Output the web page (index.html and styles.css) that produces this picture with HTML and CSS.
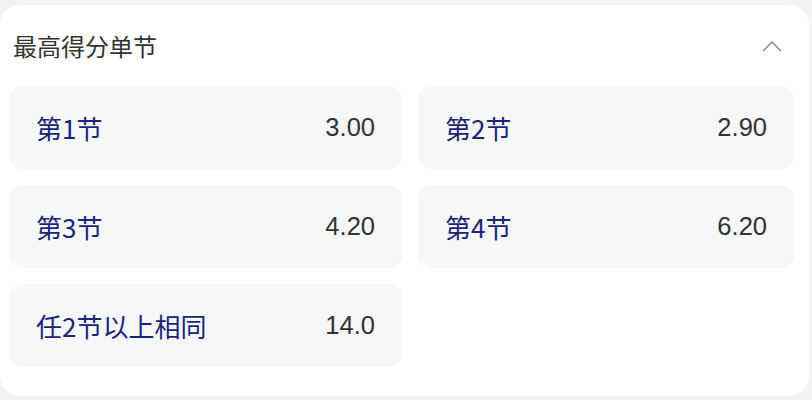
FILE: index.html
```html
<!DOCTYPE html>
<html lang="zh-CN">
<head>
    <meta charset="UTF-8">
    <meta name="viewport" content="width=device-width, initial-scale=1.0">
    <title>最高得分单节</title>
    <link rel="stylesheet" href="styles.css">
</head>
<body>
    <section class="market">
        <header class="market-head">
            <h2>最高得分单节</h2>
            <svg class="toggle" width="20" height="12" viewBox="0 0 20 12">
                <polyline points="1,11 10,2 19,11" fill="none" stroke="#8c8c8c" stroke-width="1.5"/>
            </svg>
        </header>
        <div class="odds">
            <div class="odd"><span class="name">第1节</span><span class="price">3.00</span></div>
            <div class="odd"><span class="name">第2节</span><span class="price">2.90</span></div>
            <div class="odd"><span class="name">第3节</span><span class="price">4.20</span></div>
            <div class="odd"><span class="name">第4节</span><span class="price">6.20</span></div>
            <div class="odd"><span class="name">任2节以上相同</span><span class="price">14.0</span></div>
        </div>
    </section>
</body>
</html>
```

FILE: styles.css
```css
/* Single market card */
body {
    margin: 0;
    padding: 5px 3px 4px 0;
    background-color: #f3f3f3;
    font-family: "Noto Sans CJK SC", "Noto Sans", sans-serif;
}

.market {
    background-color: #fff;
    border-radius: 20px;
    height: 391px;
    box-sizing: border-box;
    padding: 0 15px 0 9px;
}

.market-head {
    display: flex;
    justify-content: space-between;
    align-items: center;
    height: 81px;
    padding: 0 12px 0 4px;
}

.market-head h2 {
    margin: 0;
    font-size: 24px;
    font-weight: 400;
    color: #333;
}

.toggle {
    display: block;
}

.odds {
    display: grid;
    grid-template-columns: 393px 376px;
    gap: 16px;
}

.odd {
    display: flex;
    justify-content: space-between;
    align-items: center;
    height: 83px;
    padding: 0 27px 0 27px;
    background-color: #f6f7f9;
    border-radius: 13px;
}

.name {
    font-size: 26px;
    color: #1b2478;
}

.price {
    font-family: "Liberation Sans", Arial, sans-serif;
    font-size: 25.5px;
    color: #333;
}
```
